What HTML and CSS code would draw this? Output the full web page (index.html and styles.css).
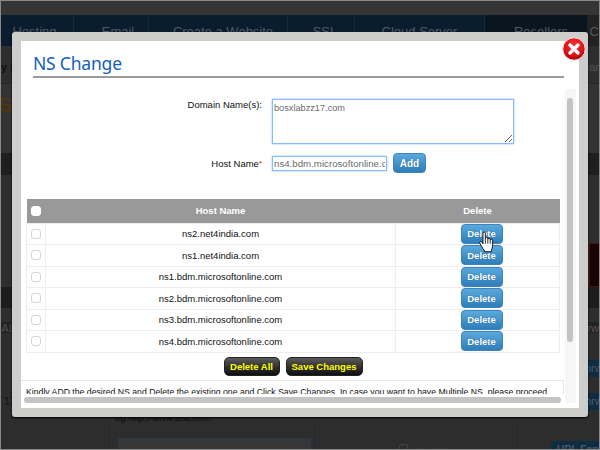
FILE: index.html
```html
<!DOCTYPE html>
<html lang="en">
<head>
    <meta charset="UTF-8">
    <title>NS Change</title>
    <link rel="stylesheet" href="styles.css">
</head>
<body>
    <div class="page">
        <div class="topbar"></div>
        <div class="nav">
            <div class="nav-item w-hosting">Hosting</div>
            <div class="nav-item w-email">Email</div>
            <div class="nav-item w-website">Create a Website</div>
            <div class="nav-item w-ssl">SSL</div>
            <div class="nav-item w-cloud">Cloud Server</div>
            <div class="nav-item w-resellers">Resellers</div>
            <div class="nav-item w-rest">C</div>
        </div>
        <div class="band band-sub"><b>y P</b><span>ear</span></div>
        <div class="band band-head"><b class="orange">S</b></div>
        <div class="band band-dark"></div>
        <div class="band band-mid"></div>
        <div class="band band-red"><i class="red-block"></i></div>
        <div class="band band-dark2"></div>
        <div class="band band-gap"></div>
        <div class="band band-dark3"><b>Al</b><span>orw</span></div>
        <div class="band band-gap2"></div>
        <div class="band band-blue"><span class="blue-tag">orw</span></div>
        <div class="band band-gap3"></div>
        <div class="band band-blue"><b class="num">17</b><span class="blue-tag">orw</span></div>
        <div class="bottom">
            <div class="cell cell-a"></div>
            <div class="cell cell-b">
                <div class="hint">eg:http://www.test.com</div>
                <div class="fake-box"></div>
            </div>
            <div class="cell cell-c"><div class="mx"><i></i>Mx Host</div></div>
            <div class="cell cell-d"><div class="url-btn">URL Forw</div></div>
        </div>

        <div class="modal">
            <svg class="close-icon" width="24" height="24" viewBox="0 0 24 24">
                <defs>
                    <radialGradient id="red" cx="50%" cy="35%" r="65%">
                        <stop offset="0" stop-color="#f43a3a"/>
                        <stop offset="0.7" stop-color="#d90f14"/>
                        <stop offset="1" stop-color="#a00508"/>
                    </radialGradient>
                </defs>
                <circle cx="12" cy="12" r="11.2" fill="url(#red)" stroke="#f3dede" stroke-width="1"/>
                <path d="M8 8l8 8M16 8l-8 8" stroke="#fff" stroke-width="3.4" stroke-linecap="round"/>
            </svg>
            <div class="modal-body">
                <h2 class="modal-title">NS Change</h2>
                <div class="form-grid">
                    <label class="lbl lbl-top">Domain Name(s):</label>
                    <textarea class="field area">bosxlabzz17.com</textarea>
                    <label class="lbl">Host Name<span class="req">*</span></label>
                    <div class="host-row">
                        <input class="field host" type="text" value="ns4.bdm.microsoftonline.com">
                        <button class="btn-blue btn-add">Add</button>
                    </div>
                </div>
                <table class="ns-table">
                    <thead>
                        <tr>
                            <th class="col-check"><input class="check check-head" type="checkbox"></th>
                            <th class="col-name">Host Name</th>
                            <th class="col-del">Delete</th>
                        </tr>
                    </thead>
                    <tbody>
                        <tr><td><input class="check" type="checkbox"></td><td>ns2.net4india.com</td><td class="del-cell"><button class="btn-blue">Delete</button></td></tr>
                        <tr><td><input class="check" type="checkbox"></td><td>ns1.net4india.com</td><td class="del-cell"><button class="btn-blue">Delete</button></td></tr>
                        <tr><td><input class="check" type="checkbox"></td><td>ns1.bdm.microsoftonline.com</td><td class="del-cell"><button class="btn-blue">Delete</button></td></tr>
                        <tr><td><input class="check" type="checkbox"></td><td>ns2.bdm.microsoftonline.com</td><td class="del-cell"><button class="btn-blue">Delete</button></td></tr>
                        <tr><td><input class="check" type="checkbox"></td><td>ns3.bdm.microsoftonline.com</td><td class="del-cell"><button class="btn-blue">Delete</button></td></tr>
                        <tr><td><input class="check" type="checkbox"></td><td>ns4.bdm.microsoftonline.com</td><td class="del-cell"><button class="btn-blue">Delete</button></td></tr>
                    </tbody>
                </table>
                <div class="actions">
                    <button class="btn-black btn-all">Delete All</button>
                    <button class="btn-black btn-save">Save Changes</button>
                </div>
                <div class="notes">Kindly ADD the desired NS and Delete the existing one and Click Save Changes. In case you want to have Multiple NS, please proceed</div>
            </div>
            <div class="vscroll"><div class="vthumb"></div></div>
            <div class="hthumb"></div>
        </div>

        <svg class="hand" width="15" height="24" viewBox="0 0 17 24">
            <path d="M4.5 2Q4.5.8 5.8.8 7.2.8 7.2 2V8Q7.2 6.8 8.6 6.8 10 6.8 10 8V9Q10 7.8 11.3 7.8 12.7 7.8 12.7 9V10Q12.7 8.8 14 8.8 15.4 8.8 15.4 10V16Q15.4 19 14 21.5V23H6V21.5Q4.5 20 3 17L1 13.5Q.3 12 1.5 11.5 2.7 11.2 3.5 12.5L4.5 14Z" fill="#fff" stroke="#000" stroke-width="1"/>
            <path d="M7.2 8V14M10 9V14M12.7 10V14" stroke="#000" stroke-width="0.9" fill="none"/>
        </svg>
    </div>
</body>
</html>
```

FILE: styles.css
```css
* {
    box-sizing: border-box;
}
html, body {
    margin: 0;
    padding: 0;
}
body {
    font-family: "Liberation Sans", Arial, sans-serif;
    background: #2d2d2d;
}
.page {
    position: relative;
    width: 600px;
    height: 450px;
    overflow: hidden;
    border: 1px solid #8a8a8a;
    background: #2d2d2d;
    display: flex;
    flex-direction: column;
}

/* dimmed page behind the dialog */
.topbar {
    height: 14px;
    flex: none;
    background: #353535;
}
.nav {
    height: 31px;
    flex: none;
    display: flex;
    background: #0a1d2e;
    color: #4f5a64;
    font-size: 13px;
}
.nav-item {
    height: 31px;
    border-right: 1px solid #16293a;
    text-align: center;
    line-height: 15px;
    padding-top: 9px;
}
.w-hosting { width: 73px; padding-right: 5px; }
.w-email { width: 75px; padding-left: 14px; }
.w-website { width: 139px; padding-left: 10px; }
.w-ssl { width: 67px; padding-left: 8px; }
.w-cloud { width: 130px; }
.w-resellers { width: 102px; background: #0a1520; border-right: 0; padding-left: 10px; }
.w-rest { flex: 1; background: #222; border-right: 0; text-align: right; }

.band {
    flex: none;
    display: flex;
    justify-content: space-between;
    align-items: center;
    color: #111;
    font-size: 11px;
}
.band span {
    color: #555;
}
.band-sub { height: 38px; background: #2e2e2e; border-bottom: 1px solid #262626; padding-top: 5px; }
.band-head { height: 69px; background: #333; align-items: flex-start; }
.band-head .orange { color: #4f340e; font-size: 21px; padding-top: 9px; margin-left: -3px; }
.band-dark { height: 22px; background: #1f1f1f; }
.band-mid { height: 68px; background: #2e2e2e; }
.band-red { height: 44px; background: #2e2e2e; justify-content: flex-end; align-items: stretch; }
.red-block { width: 10px; background: #1c0303; border: 1px solid #4a1210; border-right: 0; }
.band-dark2 { height: 21px; background: #1d1d1d; }
.band-gap { height: 14px; background: #2e2e2e; }
.band-dark3 { height: 11px; background: #222; }
.band-dark3 b { color: #444; }
.band-gap2 { height: 27px; }
.band-blue { height: 17px; justify-content: flex-end; position: relative; }
.blue-tag { width: 14px; height: 17px; background: #0e2c42; color: #4d5b66 !important; line-height: 17px; }
.band-gap3 { height: 16px; }
.num { margin-right: auto; padding-left: 3px; font-weight: normal; font-size: 10px; color: #111; }

.bottom {
    flex: 1;
    display: flex;
}
.cell {
    flex: none;
    border-right: 1px solid #282828;
}
.cell-a { width: 109px; }
.cell-b { width: 205px; padding: 2px 5px 0 5px; }
.cell-c { width: 203px; padding: 34px 0 0 84px; }
.cell-d { width: 81px; border-right: 0; padding: 31px 0 0 33px; }
.hint {
    color: #0c0c0c;
    font-size: 9.5px;
    line-height: 11px;
}
.fake-box {
    margin-top: 14px;
    margin-left: 2px;
    height: 30px;
    width: 195px;
    background: #363636;
    border: 1px solid #1d3145;
}
.mx {
    display: flex;
    gap: 3px;
    color: #3c3c3c;
    font-size: 9.5px;
    white-space: nowrap;
}
.mx i {
    width: 9px;
    height: 9px;
    border: 1px solid #444;
    border-radius: 2px;
}
.url-btn {
    width: 48px;
    height: 20px;
    overflow: hidden;
    background: #0e2c42;
    color: #4d5b66;
    border-radius: 4px 0 0 4px;
    font-size: 10px;
    font-weight: bold;
    padding: 3px 6px;
    white-space: nowrap;
}

/* dialog */
.modal {
    position: absolute;
    left: 11px;
    top: 31px;
    width: 576px;
    height: 385px;
    border: 9px solid #cdcdcb;
    border-radius: 3px;
    background: #fff;
    box-shadow: 0 1px 2px #000;
}
.close-icon {
    position: absolute;
    top: -4px;
    right: -7px;
}
.modal-body {
    height: 353px;
    width: 543px;
    overflow: hidden;
    font-size: 9.5px;
    color: #111;
}
.modal-title {
    margin: 0 0 0 12px;
    width: 533px;
    height: 37px;
    padding-top: 10px;
    font-family: "Noto Sans", sans-serif;
    font-weight: normal;
    font-size: 17.5px;
    letter-spacing: -0.2px;
    line-height: 25px;
    color: #1560bd;
    border-bottom: 2px solid #9c9c9c;
}
.form-grid {
    display: grid;
    grid-template-columns: 241px 1fr;
    column-gap: 10px;
    row-gap: 9px;
    margin-top: 21px;
    align-items: center;
}
.lbl {
    text-align: right;
    font-size: 9.5px;
    color: #111;
}
.lbl-top {
    align-self: start;
}
.req {
    color: #e00000;
    font-size: 8px;
    vertical-align: 1px;
    line-height: 0;
}
.field {
    display: block;
    border: 1px solid #86bcf8;
    box-shadow: 0 0 2px #8fc2f7;
    outline: 0;
    font-family: "Liberation Sans", Arial, sans-serif;
    color: #6c6c6c;
    border-radius: 0;
    margin: 0;
}
.area {
    width: 242px;
    height: 45px;
    padding: 3px 1px;
    font-size: 9.2px;
}
.host-row {
    display: flex;
    align-items: center;
    gap: 6px;
}
.host {
    width: 115px;
    height: 15px;
    padding: 0 1px;
    font-size: 9.7px;
}
.btn-blue {
    display: inline-block;
    width: 42px;
    height: 20px;
    padding: 0;
    border: 1px solid #3f84b8;
    border-radius: 4px;
    background: linear-gradient(#5aa9dd, #2f7db9);
    color: #fff;
    font-family: "Liberation Sans", Arial, sans-serif;
    font-size: 9.5px;
    font-weight: bold;
    text-shadow: 0 0 1px #205a88;
    vertical-align: top;
}
.btn-add {
    width: 33px;
    height: 20px;
    font-size: 10px;
}

.ns-table {
    width: 534px;
    margin: 26px 0 0 5px;
    border-collapse: collapse;
    table-layout: fixed;
    font-size: 9.5px;
    text-align: center;
}
.ns-table th {
    height: 24px;
    padding: 0;
    background: #999;
    color: #fff;
    font-size: 9.5px;
    font-weight: bold;
}
.ns-table td {
    height: 21.5px;
    padding: 0;
    border: 1px solid #eee;
}
.ns-table .del-cell {
    padding-left: 8px;
}
.col-check { width: 19px; }
.col-del { width: 164px; padding-left: 2px; }
.check {
    appearance: none;
    display: block;
    width: 10px;
    height: 10px;
    margin: 0 0 0 4px;
    border: 1px solid #d6d6d6;
    border-radius: 3px;
    background: #fff;
}
.check-head {
    border-color: #fff;
}
.actions {
    display: flex;
    justify-content: center;
    gap: 6px;
    width: 544px;
    margin-top: 4px;
}
.btn-black {
    height: 19px;
    padding: 0;
    border: 1px solid #222;
    border-radius: 5px;
    background: linear-gradient(#5a5a5a, #0e0e0e);
    color: #ff0;
    font-family: "Liberation Sans", Arial, sans-serif;
    font-size: 9.5px;
    font-weight: bold;
}
.btn-all { width: 56px; }
.btn-save { width: 77px; }
.notes {
    margin-top: 4px;
    height: 40px;
    padding: 5px 5px 0 5px;
    border-top: 1px solid #e8e8e8;
    border-right: 1px solid #e8e8e8;
    font-size: 8.7px;
    line-height: 12px;
    white-space: nowrap;
    overflow: hidden;
}
.vscroll {
    position: absolute;
    left: 544px;
    top: 48px;
    width: 11px;
    height: 314px;
    background: #f6f6f6;
    padding: 9px 2px 0 2px;
}
.vthumb {
    width: 6px;
    height: 244px;
    border-radius: 3px;
    background: #c4c4c4;
}
.hthumb {
    position: absolute;
    left: 3px;
    top: 356px;
    width: 537px;
    height: 6px;
    border-radius: 3px;
    background: #c4c4c4;
}
.hand {
    position: absolute;
    left: 478px;
    top: 229px;
}
```
